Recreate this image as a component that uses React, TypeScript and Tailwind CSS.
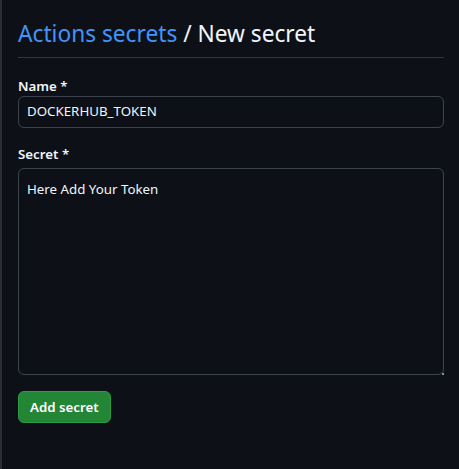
import React from "react";

export default function App() {
  return (
    <div
      className="w-[459px] h-[469px] bg-[#0d1117] flex text-[#f0f6fc]"
      style={{ fontFamily: '"Noto Sans", "Open Sans", sans-serif' }}
    >
      <div className="w-[2px] h-full bg-[#2b2d31]" />
      <div className="flex-1 pl-[16px] pr-[15px] pt-[17px]">
        <h1 className="text-[22.7px] leading-[34px] font-normal pb-[6px] border-b border-[#30363d]">
          <span className="text-[#4493f8]">Actions secrets</span>
          <span className="text-[#f0f6fc]"> / New secret</span>
        </h1>
        <div className="mt-[18px]">
          <label className="block text-[13.3px] font-semibold leading-[20px]">Name *</label>
          <div className="h-[32px] rounded-[6px] border border-[#3d444d] px-[8px] flex items-center text-[13.3px]">
            DOCKERHUB_TOKEN
          </div>
        </div>
        <div className="mt-[16px]">
          <label className="block text-[13.3px] font-semibold leading-[20px] mb-[4px]">Secret *</label>
          <div className="relative h-[207px] rounded-[6px] border border-[#3d444d] px-[8px] pt-[10px] text-[13.3px] leading-[20px]">
            Here Add Your Token
            <div className="absolute right-[-1px] bottom-[-1px] w-[2px] h-[2px] bg-[#8b949e]" />
          </div>
        </div>
        <button className="mt-[16px] h-[32px] px-[11px] rounded-[6px] bg-[#238636] border border-[#2d9a44] text-white text-[13.3px] font-semibold leading-[20px]">
          Add secret
        </button>
      </div>
    </div>
  );
}
